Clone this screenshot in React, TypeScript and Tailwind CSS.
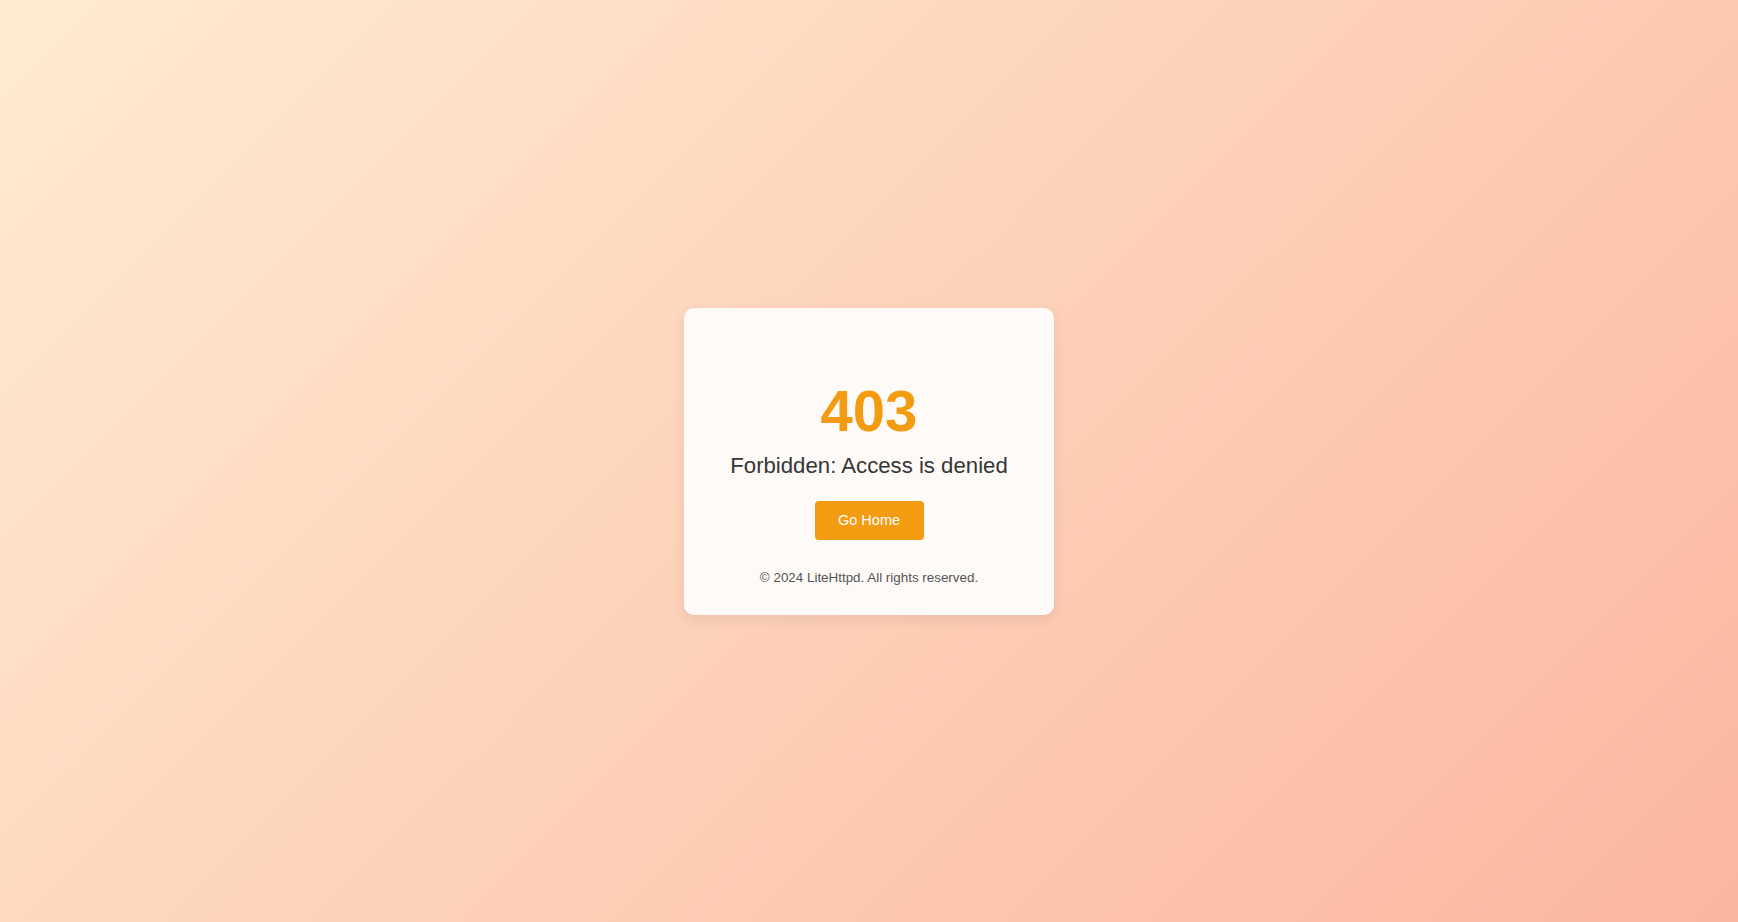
import React from "react";

export default function App() {
  return (
    <div
      className="w-full h-[922px] flex items-center justify-center bg-[linear-gradient(135deg,#ffecd2_0%,#fcb69f_100%)]"
      style={{ fontFamily: '"Liberation Sans", Arial, sans-serif' }}
    >
      <div className="w-[370px] h-[307px] rounded-[10px] bg-[#fefaf7] shadow-[0_4px_14px_rgba(0,0,0,0.08)] flex flex-col items-center pt-[74px]">
        <h1 className="text-[58px] leading-[58px] font-bold text-[#f39c12]">403</h1>
        <p className="mt-[15px] text-[22.2px] leading-[22px] text-[#363636]">
          Forbidden: Access is denied
        </p>
        <button className="mt-[24px] w-[109px] h-[39px] pt-[2px] rounded-[4px] bg-[#f39c12] text-white text-[14.5px]">
          Go Home
        </button>
        <p className="mt-[31px] text-[13.4px] leading-[14px] text-[#555555]">
          © 2024 LiteHttpd. All rights reserved.
        </p>
      </div>
    </div>
  );
}
